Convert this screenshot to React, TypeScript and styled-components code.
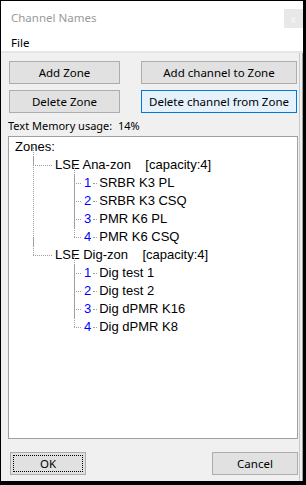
import styled, { createGlobalStyle } from 'styled-components'

const GlobalStyle = createGlobalStyle`
  html, body {
    margin: 0;
    padding: 0;
    background: #000;
  }
  #root {
    width: 306px;
    height: 485px;
  }
`

type Zone = {
  name: string
  capacity: number
  channels: string[]
}

const zones: Zone[] = [
  { name: 'LSE Ana-zon', capacity: 4, channels: ['SRBR K3 PL', 'SRBR K3 CSQ', 'PMR K6 PL', 'PMR K6 CSQ'] },
  { name: 'LSE Dig-zon', capacity: 4, channels: ['Dig test 1', 'Dig test 2', 'Dig dPMR K16', 'Dig dPMR K8'] },
]

const Frame = styled.div`
  width: 306px;
  height: 485px;
  padding: 1px 3px 4px 1px;
  box-sizing: border-box;
  background: #000;
`

const Window = styled.div`
  width: 302px;
  height: 480px;
  display: flex;
  flex-direction: column;
  background: #f0f0f0;
  font-family: 'Noto Sans', 'Open Sans', sans-serif;
  font-size: 11px;
  color: #000;
`

const TitleBar = styled.div`
  height: 32px;
  display: flex;
  align-items: center;
  justify-content: space-between;
  padding: 0 0 0 10px;
  background: #fff;
  color: #999;
  font-size: 11.5px;
`

const CloseButton = styled.div`
  width: 19px;
  height: 19px;
  margin-top: 3px;
  display: flex;
  align-items: center;
  justify-content: center;
  background: #e8e8e8;
  color: #f8f8f8;
  font-size: 10px;
`

const MenuBar = styled.div`
  height: 18px;
  padding-left: 10px;
  display: flex;
  align-items: center;
  background: #fff;
  font-size: 11.5px;
  border-bottom: 2px solid #e6e6e6;
`

const Body = styled.div`
  flex: 1;
  display: flex;
  flex-direction: column;
  padding: 8px 4px 0 7px;
  border-right: 1px solid #a0a0a0;
  box-shadow: inset -2px 0 0 #f0f0f0, inset -3px 0 0 #c8c8c8;
`

const ButtonGrid = styled.div`
  display: grid;
  grid-template-columns: 111px 156px;
  column-gap: 21px;
  row-gap: 6px;
  padding-left: 1px;
`

const Button = styled.div<{ $focused?: boolean; $dotted?: boolean; $width?: number }>`
  height: 23px;
  ${p => (p.$width ? `width: ${p.$width}px;` : '')}
  box-sizing: border-box;
  display: flex;
  align-items: center;
  justify-content: center;
  border: 1px solid ${p => (p.$focused ? '#0078d7' : '#adadad')};
  background: ${p => (p.$focused ? '#e5f1fb' : '#e1e1e1')};
  font-size: 11.5px;
  position: relative;
  ${p =>
    p.$dotted &&
    `
    &::after {
      content: '';
      position: absolute;
      inset: 2px;
      border: 1px dotted #000;
    }
  `}
`

const MemoryLabel = styled.div`
  margin: 5px 0 3px 0;
  height: 15px;
  line-height: 15px;
  font-size: 11px;
  white-space: pre;
`

const TreeBox = styled.div`
  height: 303px;
  width: 290px;
  box-sizing: border-box;
  border: 1px solid #a0a0a0;
  background: #fff;
  padding: 1px 0 0 6px;
  font-family: 'Liberation Sans', Arial, sans-serif;
  font-size: 13px;
`

const Row = styled.div`
  height: 18px;
  line-height: 18px;
  white-space: pre;
`

const List = styled.div<{ $indent: number }>`
  padding-left: ${p => p.$indent}px;
`

const Item = styled.div<{ $stub: number }>`
  position: relative;
  padding-left: ${p => p.$stub}px;

  &::before {
    content: '';
    position: absolute;
    left: 0;
    top: 9px;
    width: ${p => p.$stub - 3}px;
    border-top: 1px dotted #a0a0a0;
  }

  &::after {
    content: '';
    position: absolute;
    left: 0;
    top: -9px;
    height: 18px;
    border-left: 1px dotted #a0a0a0;
  }
`

const Trunk = styled.div`
  position: absolute;
  left: 0;
  top: 0;
  bottom: 0;
  border-left: 1px dotted #a0a0a0;
`

const Num = styled.span`
  color: #0000ff;
`

const Dot = styled.span`
  display: inline-block;
  width: 4px;
  margin: 0 2px;
  vertical-align: middle;
  border-top: 1px dotted #a0a0a0;
`

const Footer = styled.div`
  display: flex;
  justify-content: space-between;
  padding: 13px 0 0 2px;
`

function Channels({ items }: { items: string[] }) {
  return (
    <List $indent={19}>
      {items.map((name, i) => (
        <Item key={name} $stub={10}>
          {i < items.length - 1 && <Trunk />}
          <Row>
            <Num>{i + 1}</Num>
            <Dot />
            {name}
          </Row>
        </Item>
      ))}
    </List>
  )
}

export default function App() {
  return (
    <Frame>
      <GlobalStyle />
      <Window>
        <TitleBar>
          Channel Names
          <CloseButton>x</CloseButton>
        </TitleBar>
        <MenuBar>File</MenuBar>
        <Body>
          <ButtonGrid>
            <Button>Add Zone</Button>
            <Button>Add channel to Zone</Button>
            <Button>Delete Zone</Button>
            <Button $focused>Delete channel from Zone</Button>
          </ButtonGrid>
          <MemoryLabel>Text Memory usage:  14%</MemoryLabel>
          <TreeBox>
            <Row>Zones:</Row>
            <List $indent={18}>
              {zones.map((zone, i) => (
                <Item key={zone.name} $stub={22}>
                  {i < zones.length - 1 && <Trunk />}
                  <Row>{`${zone.name}    [capacity:${zone.capacity}]`}</Row>
                  <Channels items={zone.channels} />
                </Item>
              ))}
            </List>
          </TreeBox>
          <Footer>
            <Button $dotted $width={76}>
              OK
            </Button>
            <Button $width={86}>Cancel</Button>
          </Footer>
        </Body>
      </Window>
    </Frame>
  )
}
